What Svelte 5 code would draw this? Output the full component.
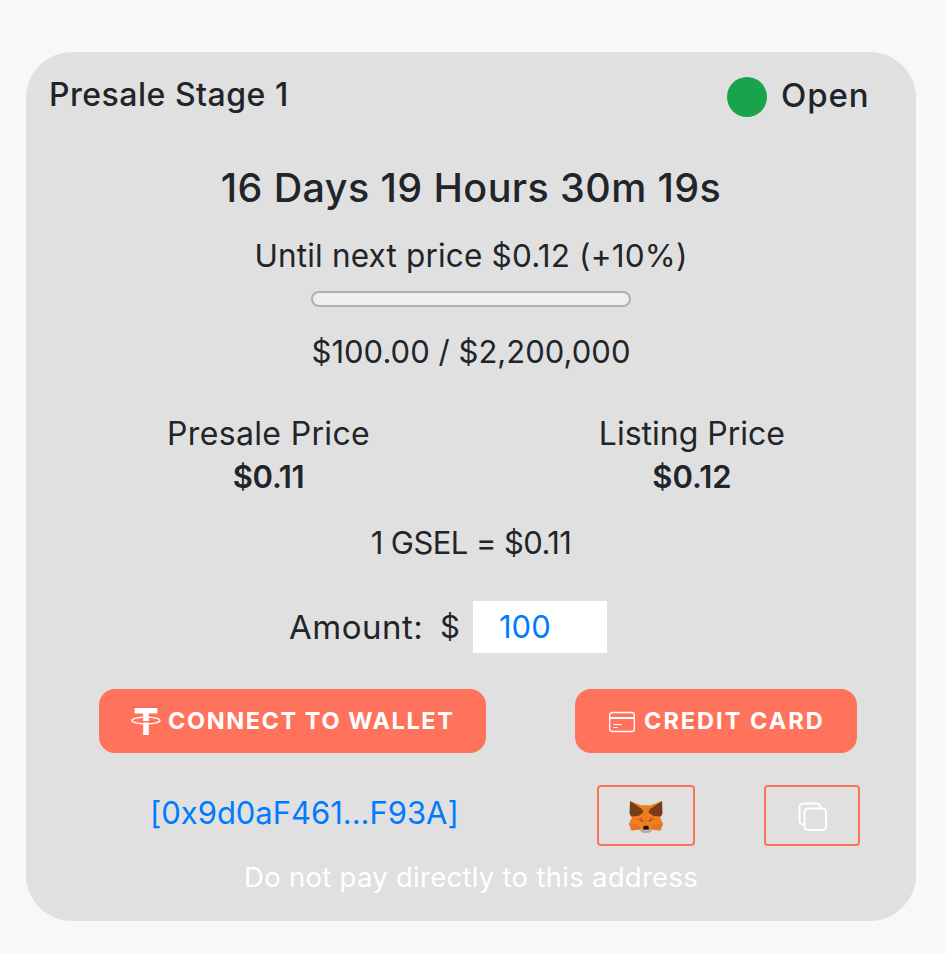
<script>
  let amount = $state('100');
</script>

<main class="card">
  <header>
    <h2 class="stage">Presale Stage 1</h2>
    <div class="status">
      <span class="dot"></span>
      <span class="open">Open</span>
    </div>
  </header>

  <h1>16 Days 19 Hours 30m 19s</h1>
  <p class="until">Until next price $0.12 (+10%)</p>
  <div class="progress" role="progressbar" aria-valuenow="0" aria-valuemin="0" aria-valuemax="2200000"></div>
  <p class="raised">$100.00 / $2,200,000</p>

  <section class="prices">
    <div class="price presale">
      <span class="label">Presale Price</span>
      <strong>$0.11</strong>
    </div>
    <div class="price listing">
      <span class="label">Listing Price</span>
      <strong>$0.12</strong>
    </div>
  </section>

  <p class="rate">1 GSEL = $0.11</p>

  <div class="amount">
    <label for="amount">Amount:</label>
    <span class="dollar">$</span>
    <input id="amount" type="text" bind:value={amount} />
  </div>

  <div class="buttons">
    <button class="wallet">
      <svg width="30" height="30" viewBox="0 0 30 30" fill="#fff">
        <path d="M0 1.2h30" stroke="#d9604f" stroke-width=".7" opacity=".7" />
        <path d="M3.7 2h22.6v5.6h-8.5v3.6h-5.6V7.6H3.7z" />
        <path d="M12.2 16.5h5.600V29h-5.600z" />
        <path d="M12.2 10.7h5.600v4.300h-5.600z" />
        <ellipse cx="15" cy="14.5" rx="14" ry="3.400" fill="none" stroke="#fff" stroke-width="1.4" />
      </svg>
      <span>CONNECT TO WALLET</span>
    </button>
    <button class="credit">
      <svg width="28" height="22" viewBox="0 0 28 22" fill="none" stroke="#fff">
        <rect x="1.7" y="1.5" width="24.6" height="19" rx="2.600" stroke-width="1.3" />
        <path d="M1.700 7h24.600" stroke-width="2" />
        <path d="M5.500 13.500h8M5.500 16.500h4" stroke-width="1" />
      </svg>
      <span>CREDIT CARD</span>
    </button>
  </div>

  <div class="wallet-row">
    <a class="address" href="#address">[0x9d0aF461...F93A]</a>
    <button class="outline fox" aria-label="MetaMask">
      <svg width="36" height="34" viewBox="0 0 36 34">
        <path d="M2 1 14 5.500h8L34 1l-.5 13-1.500 3.500 3 6-2.500 7-7-1.500-4 3.500h-7l-4-3.500-7 1.500-2.500-7 3-6-1.500-3.500z" fill="#f0801f" />
        <path d="M14 5.500h8l-2 12-1 8h-2l-1-8z" fill="#ef7c1c" />
        <path d="M2 1 14 9l1.500 3.500-5 3.500-7.500.5-1.500-3zM34 1 22 9l-1.500 3.500 5 3.500 7.500.5 1.500-3z" fill="#763d16" />
        <path d="m8.500 19.500 5-2.500 2.500 4.500zM27.500 19.500l-5-2.500-2.500 4.500z" fill="#d9602a" />
        <path d="m11.500 20.500 3-.3.800 1.600zM24.500 20.500l-3-.3-.8 1.600z" fill="#59463b" />
        <path d="m1 23.500 9.500.5 3 5.500-10 1zM35 23.500l-9.500.5-3 5.500 10 1z" fill="#e8732b" />
        <path d="m11.500 29 3.500-.5h6l3.500.5-4 4h-5z" fill="#c0ac9d" />
        <path d="m15.500 26.500.8-.8h3.400l.8.800.5 3h-6z" fill="#161616" />
      </svg>
    </button>
    <button class="outline copy" aria-label="Copy address">
      <svg width="30" height="30" viewBox="0 0 30 30" fill="none" stroke="#fff" stroke-width="1.900">
        <path d="M6.500 22.500H5.500a4 4 0 0 1-4-4V5.500a4 4 0 0 1 4-4h13a4 4 0 0 1 4 4v1" />
        <rect x="6.500" y="6.500" width="21.500" height="21.500" rx="3.500" />
      </svg>
    </button>
  </div>

  <p class="note">Do not pay directly to this address</p>
</main>

<style>
  :global(body) { background: #f8f8f8; }
  :global(#app) { display: flow-root; }
  .card {
    box-sizing: border-box;
    width: 890px;
    height: 869px;
    margin: 52px 0 0 26px;
    padding-top: 23px;
    border-radius: 46px;
    background: #e0e0e0;
    color: #212529;
    font: 400 31px/40px Inter, "Open Sans", sans-serif;
    white-space: nowrap;
  }
  h1, h2, p { margin: 0; font-weight: inherit; text-align: center; }
  button { font: inherit; padding: 0; border: 0; background: none; cursor: pointer; }
  svg { display: block; flex: none; }

  header { display: flex; justify-content: space-between; height: 40px; padding: 0 46px 0 23px; font-weight: 500; }
  .stage { font-size: 32px; letter-spacing: .5px; }
  .status { display: flex; gap: 14px; }
  .dot { width: 40px; height: 40px; margin-top: 2px; border-radius: 50%; background: #19a44b; }
  .open { width: 89px; font-size: 33px; letter-spacing: .9px; }

  h1 { margin-top: 48px; font-size: 39.5px; font-weight: 500; line-height: 50px; letter-spacing: .4px; }
  .until { margin-top: 23px; font-size: 31.5px; letter-spacing: .17px; }
  .progress { box-sizing: border-box; width: 320px; height: 16px; margin: 15px auto 0; border: 2px solid #b0b0b0; border-radius: 8px; background: #efefef; }
  .raised { margin-top: 25px; letter-spacing: .03px; }

  .prices { display: flex; justify-content: space-between; margin-top: 42px; padding: 0 131px 0 141px; }
  .price { display: flex; flex-direction: column; align-items: center; gap: 3px; }
  .price strong { font-weight: 600; }
  .presale .label { font-size: 32px; letter-spacing: .35px; }
  .presale strong { letter-spacing: -.3px; }
  .listing .label { font-size: 32px; letter-spacing: 0; }

  .rate { margin-top: 26px; letter-spacing: -.56px; }

  .amount { display: flex; align-items: center; height: 52px; margin-top: 38px; padding-left: 263px; }
  .amount label { width: 151px; font-size: 33px; letter-spacing: .5px; }
  .dollar { width: 33px; }
  input { box-sizing: border-box; width: 134px; height: 52px; padding: 0 26px 2px; border: 0; border-radius: 0; outline: 0; background: #fff; color: #007bff; font: inherit; }

  .buttons { display: flex; justify-content: space-between; height: 64px; margin-top: 36px; padding: 0 59px 0 73px; }
  .buttons button { box-sizing: border-box; display: flex; align-items: center; border-radius: 16px; background: #ff735d; color: #fff; font-size: 23.5px; font-weight: 700; }
  .wallet { width: 387px; padding-left: 32px; gap: 7px; letter-spacing: 1.58px; }
  .credit { width: 282px; padding-left: 33px; gap: 8px; letter-spacing: 2px; }
  .buttons span { padding-bottom: 1px; }
  .credit svg { margin-top: 2px; }

  .wallet-row { display: flex; height: 61px; margin-top: 32px; padding-left: 124px; }
  .address { width: 447px; line-height: 56px; color: #007bff; text-decoration: none; letter-spacing: -.03px; }
  .outline { box-sizing: border-box; display: flex; align-items: center; justify-content: center; height: 61px; border: 2px solid #ff735d; border-radius: 4px; }
  .fox { width: 98px; }
  .copy { width: 96px; margin-left: 69px; }
  .fox svg { margin-top: 2px; }
  .copy svg { margin: 3px 0 0 1px; }

  .note { margin-top: 11px; color: #fff; font-size: 27.5px; letter-spacing: .28px; }
</style>
